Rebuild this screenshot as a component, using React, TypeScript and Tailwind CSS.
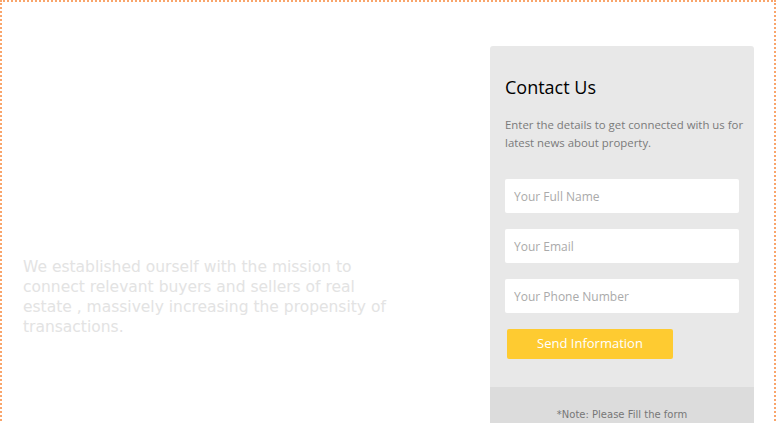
import React from "react";

const fields = ["Your Full Name", "Your Email", "Your Phone Number"];

function ContactCard() {
  return (
    <div className="w-[264px] shrink-0 mt-[44px] bg-[#e8e8e8] rounded-[3px] overflow-hidden font-['Open_Sans',sans-serif]">
      <div className="px-[15px] pt-[29px] pb-[28px]">
        <h3 className="text-[18px] leading-[24px] text-black">Contact Us</h3>
        <p className="mt-[17px] -mr-[10px] text-[11.4px] leading-[18px] text-[#7a7a7a]">
          Enter the details to get connected with us for latest news about property.
        </p>
        <form className="mt-[27px] flex flex-col gap-[16px]" onSubmit={(e) => e.preventDefault()}>
          {fields.map((f) => (
            <input
              key={f}
              placeholder={f}
              className="h-[34px] w-full bg-white rounded-[2px] px-[9px] text-[12px] text-[#555] placeholder:text-[#aaa] outline-none"
            />
          ))}
          <button
            type="submit"
            className="ml-[2px] w-[166px] h-[30px] bg-[#fecb31] rounded-[2px] text-white text-[13px]"
          >
            Send Information
          </button>
        </form>
      </div>
      <div className="bg-[#dcdcdc] h-[60px] pt-[20px] text-center text-[10px] leading-[16px] text-[#777] font-['DejaVu_Sans',sans-serif]">
        *Note: Please Fill the form
      </div>
    </div>
  );
}

export default function App() {
  return (
    <div className="w-[776px] min-h-[480px] bg-white border-2 border-dotted border-[#f9a56b]">
      <div className="flex">
        <div className="w-[488px] pl-[21px] pr-[100px] pt-[255px]">
          <p className="text-[15.5px] leading-[20px] text-[#e3e3e3] font-['DejaVu_Sans',sans-serif]">
            We established ourself with the mission to connect relevant buyers and sellers of real
            estate , massively increasing the propensity of transactions.
          </p>
        </div>
        <ContactCard />
      </div>
    </div>
  );
}
